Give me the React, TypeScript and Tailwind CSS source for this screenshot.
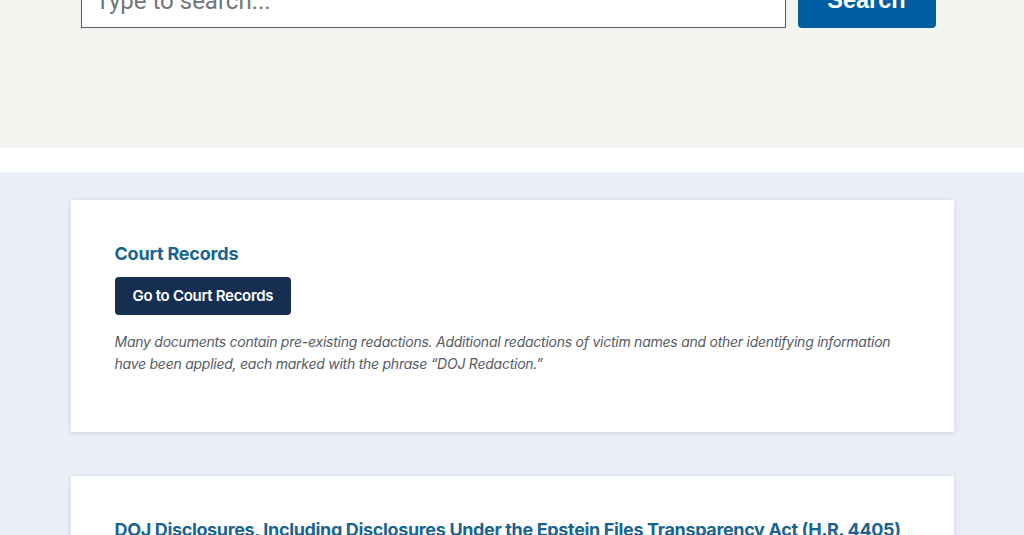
export default function App() {
  return (
    <div className="min-h-screen bg-[#ebeff6] font-['Inter',sans-serif] overflow-hidden">
      {/* Search */}
      <section className="bg-[#f4f4f1] -mt-[27px] pb-[120px]">
        <form className="mx-auto w-[863px] pr-2 flex gap-3" onSubmit={(e) => e.preventDefault()}>
          <input
            type="text"
            placeholder="Type to search..."
            className="flex-1 h-[55px] px-[14px] bg-white border border-[#565c65] text-[24px] font-['Roboto',sans-serif] placeholder:text-[#71767a] outline-none"
          />
          <button className="w-[138px] h-[55px] rounded bg-[#005ea2] text-white text-[23.5px] font-bold font-['Liberation_Sans',sans-serif]">
            Search
          </button>
        </form>
      </section>

      <div className="h-6 bg-white" />

      {/* Cards */}
      <section className="pt-7 pb-10">
        <div className="mx-auto w-[883px] flex flex-col gap-11">
          <div className="bg-white shadow-[0_1px_6px_rgba(0,0,0,0.12)] px-11 pt-[42px] pb-[57px]">
            <h2 className="text-[18px] font-bold text-[#19658f] leading-[24px] tracking-[-0.2px]">Court Records</h2>
            <a
              href="#"
              className="inline-flex items-center mt-[11px] h-[38px] px-[18px] rounded bg-[#162e51] text-white text-[15px] font-semibold tracking-[-0.3px]"
            >
              Go to Court Records
            </a>
            <p className="mt-[16px] text-[14px] italic leading-[22px] tracking-[-0.25px] text-[#565c65]">
              Many documents contain pre-existing redactions. Additional redactions of victim names and other identifying
              information have been applied, each marked with the phrase “DOJ Redaction.”
            </p>
          </div>

          <div className="bg-white shadow-[0_1px_6px_rgba(0,0,0,0.12)] px-11 pt-[42px] pb-[54px]">
            <h2 className="text-[18px] font-bold text-[#19658f] leading-[24px] tracking-[-0.35px] underline underline-offset-2">
              DOJ Disclosures, Including Disclosures Under the Epstein Files Transparency Act (H.R. 4405)
            </h2>
          </div>
        </div>
      </section>
    </div>
  );
}
